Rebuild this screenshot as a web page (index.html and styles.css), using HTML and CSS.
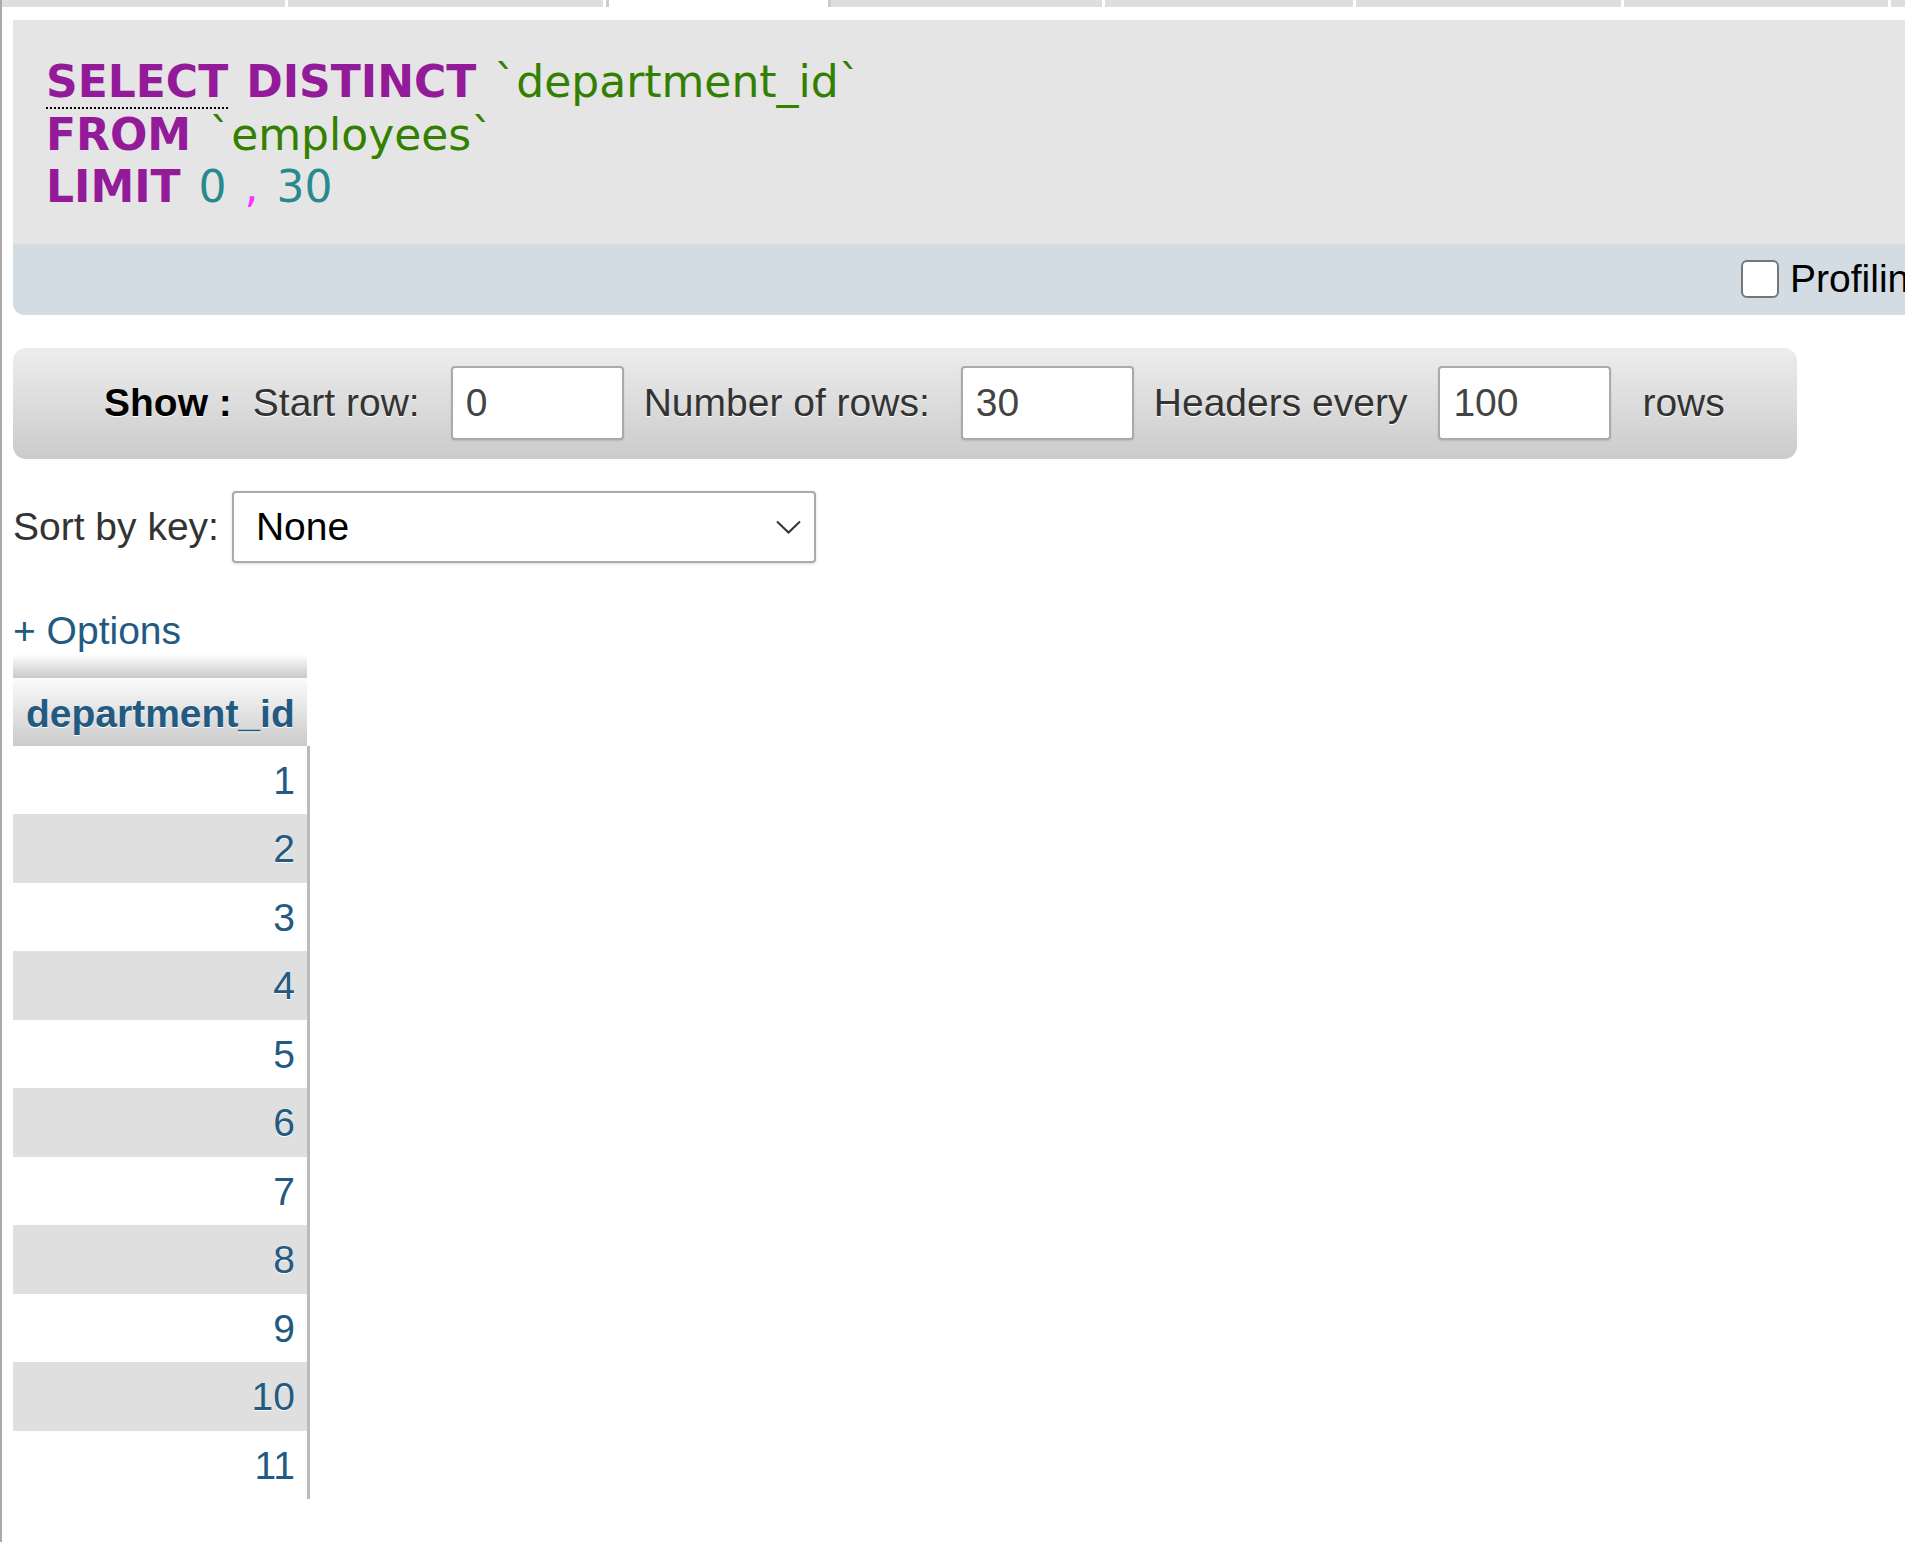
FILE: index.html
```html
<!DOCTYPE html>
<html lang="en">
<head>
<meta charset="utf-8">
<title>SELECT DISTINCT department_id</title>
<link rel="stylesheet" href="styles.css">
</head>
<body>
<div class="page">
  <div class="tabs">
    <div class="tab t1"></div>
    <div class="tab t2"></div>
    <div class="tab active"></div>
    <div class="tab t4"></div>
    <div class="tab t5"></div>
    <div class="tab t6"></div>
    <div class="tab t7"></div>
    <div class="tab t8"></div>
  </div>
  <div class="content">
    <div class="sqlbox">
      <div class="sqlcode"><div class="line"><span class="kw doc">SELECT</span> <span class="kw">DISTINCT</span> <span class="ident">`department_id`</span></div><div class="line"><span class="kw">FROM</span> <span class="ident">`employees`</span></div><div class="line"><span class="kw">LIMIT</span> <span class="num">0</span> <span class="punct">,</span> <span class="num">30</span></div></div>
      <div class="sqlfoot">
        <label class="profiling"><input type="checkbox" class="chk">Profiling</label>
      </div>
    </div>

    <form class="navbar">
      <span class="show-label">Show :</span>
      <label class="lbl" for="pos">Start row:</label>
      <input class="num-input" id="pos" type="text" value="0">
      <label class="lbl" for="nrows">Number of rows:</label>
      <input class="num-input" id="nrows" type="text" value="30">
      <label class="lbl" for="rep">Headers every</label>
      <input class="num-input" id="rep" type="text" value="100">
      <span class="rows-label">rows</span>
    </form>

    <div class="sortrow">
      <label class="sort-label" for="sortkey">Sort by key:</label>
      <div class="select-wrap">
        <select id="sortkey" class="sel"><option>None</option></select>
        <svg class="chev" viewBox="0 0 25 14" width="25" height="14" aria-hidden="true"><path d="M1 1.5 L12.5 12.5 L24 1.5" fill="none" stroke="#333" stroke-width="2"/></svg>
      </div>
    </div>

    <a class="options" href="#">+ Options</a>

    <div class="results">
      <div class="strip"></div>
      <div class="th">department_id</div>
      <div class="rows">
        <div class="row">1</div>
        <div class="row">2</div>
        <div class="row">3</div>
        <div class="row">4</div>
        <div class="row">5</div>
        <div class="row">6</div>
        <div class="row">7</div>
        <div class="row">8</div>
        <div class="row">9</div>
        <div class="row">10</div>
        <div class="row">11</div>
      </div>
    </div>
  </div>
</div>
</body>
</html>
```

FILE: styles.css
```css
* { box-sizing: border-box; }
html, body { margin: 0; padding: 0; background: #fff; }
body {
  font-family: "Liberation Sans", Arial, sans-serif;
  font-size: 39px;
  color: #333;
  overflow: hidden;
}
.page {
  border-left: 2px solid #aaa;
  min-height: 1542px;
  overflow: hidden;
}

/* top tabs (cut off) */
.tabs { display: flex; height: 7px; }
.tab { background: #dedede; flex: none; margin-left: 3px; }
.t1 { width: 283px; margin-left: 0; }
.t2 { width: 315px; }
.active { width: 225px; background: #fff; border-left: 3px solid #ccc; border-right: 3px solid #ccc; }
.t4 { width: 271px; margin-left: 0; }
.t5 { width: 248px; }
.t6 { width: 265px; }
.t7 { width: 264px; }
.t8 { flex: 1; }

.content { padding-left: 11px; }

/* SQL box */
.sqlbox {
  margin-top: 13px;
  width: 1960px;
  background: #e5e5e5;
  border-radius: 0 0 12px 12px;
  overflow: hidden;
}
.sqlcode {
  padding: 36px 34px 30px 33px;
  font-family: "DejaVu Sans", Verdana, sans-serif;
  font-size: 44px;
  line-height: 52.5px;
  word-spacing: 4px;
  white-space: pre;
}
.kw { color: #931a99; font-weight: bold; }
.doc { border-bottom: 2px dotted #000; }
.ident { color: #338000; }
.num { color: #288a8e; }
.punct { color: #ff33ff; }

.sqlfoot {
  background: #d3dce3;
  height: 71px;
  display: flex;
  align-items: center;
  justify-content: flex-end;
  padding-right: 42px;
}
.profiling { display: flex; align-items: center; color: #000; }
.chk {
  appearance: none;
  -webkit-appearance: none;
  width: 38px;
  height: 38px;
  margin: 0 11px 0 0;
  border: 2px solid #767676;
  border-radius: 6px;
  background: #fff;
}

/* navigation bar */
.navbar {
  margin: 33px 0 0 0;
  width: 1784px;
  height: 111px;
  border-radius: 13px;
  background: linear-gradient(#ededed, #cbcbcb);
  display: flex;
  align-items: center;
  padding-left: 91px;
  text-shadow: 0 1px 0 #fff;
  color: #333;
}
.show-label { font-weight: bold; color: #000; margin-right: 21px; }
.lbl { margin-right: 31px; }
.num-input {
  width: 173px;
  height: 74px;
  border: 2px solid #aaa;
  border-radius: 4px;
  padding: 0 13px;
  font: inherit;
  color: #444;
  background: #fff;
  margin: 0 20px 0 0;
  text-shadow: none;
  box-shadow: 0 1px 2px rgba(0, 0, 0, 0.12);
  outline: none;
}
.rows-label { margin-left: 11px; }

/* sort by key */
.sortrow {
  margin-top: 32px;
  display: flex;
  align-items: center;
}
.sort-label { margin-right: 13px; color: #333; }
.select-wrap { position: relative; width: 584px; height: 72px; }
.sel {
  appearance: none;
  -webkit-appearance: none;
  width: 100%;
  height: 100%;
  border: 2px solid #aaa;
  border-radius: 4px;
  background: #fff;
  font: inherit;
  color: #000;
  padding: 0 22px;
  box-shadow: 0 1px 3px rgba(0, 0, 0, 0.15);
  outline: none;
}
.chev { position: absolute; right: 15px; top: 29px; }

.options {
  display: block;
  margin-top: 45px;
  line-height: 45px;
  color: #235a81;
  text-decoration: none;
}

/* results table */
.results { margin-top: 1px; }
.strip {
  width: 294px;
  height: 24px;
  background: linear-gradient(#fff, #c9c9c9);
}
.th {
  width: 294px;
  height: 68px;
  padding: 13px 13px 0 13px;
  line-height: 45px;
  background: linear-gradient(#fbfbfb, #cbcbcb);
  font-weight: bold;
  color: #235a81;
  text-shadow: 0 1px 0 #fff;
  white-space: nowrap;
}
.rows {
  width: 297px;
  border-right: 3px solid #bbb;
}
.row {
  height: 68.5px;
  padding: 12px 12px 0 0;
  line-height: 45px;
  text-align: right;
  color: #235a81;
  text-shadow: 0 1px 0 #fff;
}
.row:nth-child(even) { background: #dfdfdf; }
```
